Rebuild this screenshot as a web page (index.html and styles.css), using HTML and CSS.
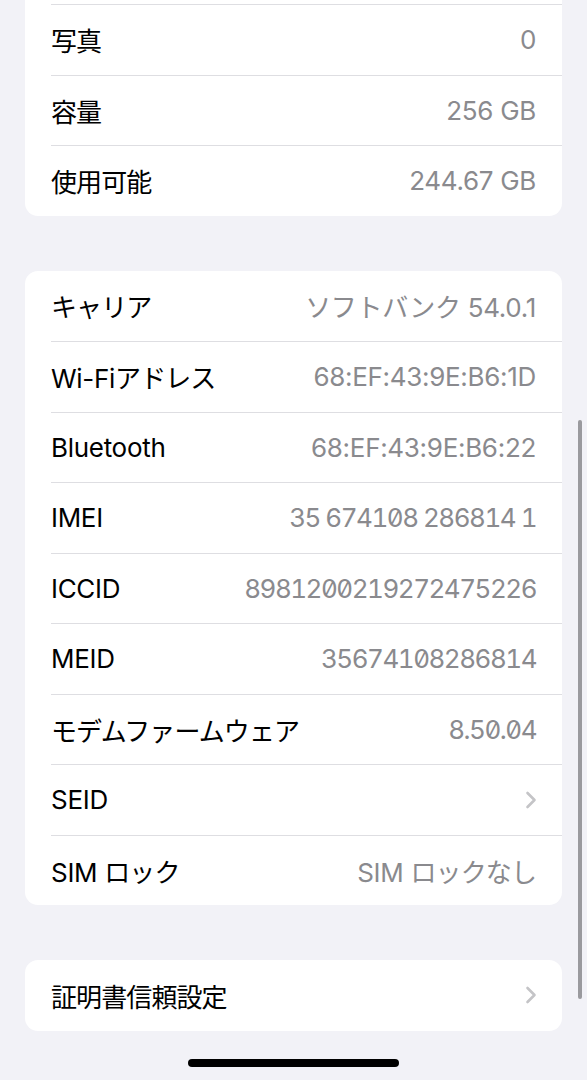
FILE: index.html
```html
<!DOCTYPE html>
<html lang="ja">
<head>
  <meta charset="UTF-8">
  <title>情報</title>
  <link rel="stylesheet" href="styles.css">
</head>
<body>
  <div class="screen">
    <section class="group group-top">
      <div class="row"><span class="label jp">写真</span><span class="value">0</span></div>
      <div class="row"><span class="label jp">容量</span><span class="value">256 GB</span></div>
      <div class="row"><span class="label jp">使用可能</span><span class="value">244.67 GB</span></div>
    </section>

    <section class="group">
      <div class="row"><span class="label jp">キャリア</span><span class="value">ソフトバンク 54.0.1</span></div>
      <div class="row"><span class="label">Wi-Fi<span class="jp">アドレス</span></span><span class="value">68:EF:43:9E:B6:1D</span></div>
      <div class="row"><span class="label">Bluetooth</span><span class="value">68:EF:43:9E:B6:22</span></div>
      <div class="row"><span class="label">IMEI</span><span class="value num">35 674108 286814 1</span></div>
      <div class="row"><span class="label">ICCID</span><span class="value num">8981200219272475226</span></div>
      <div class="row"><span class="label">MEID</span><span class="value num">35674108286814</span></div>
      <div class="row"><span class="label jp">モデムファームウェア</span><span class="value num">8.50.04</span></div>
      <div class="row">
        <span class="label">SEID</span>
        <svg class="chevron" width="12" height="18" viewBox="0 0 12 18"><path d="M2.5 2 L9.5 9 L2.5 16" /></svg>
      </div>
      <div class="row"><span class="label">SIM <span class="jp">ロック</span></span><span class="value">SIM <span class="jp">ロックなし</span></span></div>
    </section>

    <section class="group">
      <div class="row">
        <span class="label jp">証明書信頼設定</span>
        <svg class="chevron" width="12" height="18" viewBox="0 0 12 18"><path d="M2.5 2 L9.5 9 L2.5 16" /></svg>
      </div>
    </section>

    <div class="home-bar"></div>
    <div class="scroll-thumb"></div>
  </div>
</body>
</html>
```

FILE: styles.css
```css
body {
  margin: 0;
  background-color: #f2f2f7;
  font-family: Inter, "Noto Sans CJK JP", sans-serif;
  font-size: 26px;
  letter-spacing: -0.3px;
  color: #000;
}
.screen {
  height: 1080px;
  overflow: hidden;
  padding: 0 25px;
}
.group {
  background: white;
  border-radius: 13px;
  margin-bottom: 55px;
}
/* list is scrolled, so the first card starts above the top edge */
.group-top {
  margin-top: -20px;
  padding-top: 24px;
}
.row {
  display: flex;
  justify-content: space-between;
  align-items: center;
  height: 70.5px;
  margin-left: 26px;
  padding-right: 26px;
  box-sizing: border-box;
}
.row + .row,
.group-top .row:first-child {
  border-top: 1px solid #dedee2;
}
.jp {
  letter-spacing: -0.9px;
}
.value {
  color: #8a8a8e;
}
.value.num {
  font-feature-settings: "tnum", "zero";
  letter-spacing: -1.5px;
}
.chevron {
  margin-right: -1px;
}
.chevron path {
  fill: none;
  stroke: #c4c4c7;
  stroke-width: 2.6;
  stroke-linecap: round;
  stroke-linejoin: round;
}
.home-bar {
  width: 211px;
  height: 8px;
  margin: -27px auto 0;
  border-radius: 4px;
  background: #000;
}
.scroll-thumb {
  position: fixed;
  top: 420px;
  right: 5px;
  width: 4px;
  height: 579px;
  border-radius: 2px;
  background: #9a9a9e;
}
```
